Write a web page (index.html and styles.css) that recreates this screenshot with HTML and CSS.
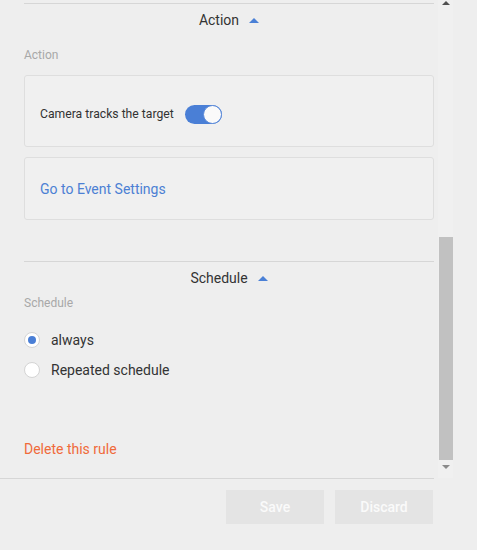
FILE: index.html
```html
<!DOCTYPE html>
<html>
<head>
<meta charset="utf-8">
<link rel="stylesheet" href="styles.css">
</head>
<body>
<div class="main">
  <div class="content">
    <div class="section-head first">
      <span class="title">Action</span>
      <span class="caret"></span>
    </div>
    <div class="label label-action">Action</div>
    <div class="card card-toggle">
      <span class="card-text">Camera tracks the target</span>
      <span class="toggle"><span class="knob"></span></span>
    </div>
    <div class="card card-link">
      <a class="link">Go to Event Settings</a>
    </div>
    <div class="section-head second">
      <span class="title">Schedule</span>
      <span class="caret"></span>
    </div>
    <div class="label label-schedule">Schedule</div>
    <div class="radios">
      <div class="radio-row"><span class="radio checked"></span><span>always</span></div>
      <div class="radio-row"><span class="radio"></span><span>Repeated schedule</span></div>
    </div>
    <div class="delete">Delete this rule</div>
  </div>
  <div class="scrollbar">
    <span class="arrow up"></span>
    <span class="thumb"></span>
    <span class="arrow down"></span>
  </div>
</div>
<div class="footer">
  <button class="btn">Save</button>
  <button class="btn">Discard</button>
</div>
</body>
</html>
```

FILE: styles.css
```css
html, body {
  margin: 0;
  padding: 0;
  background: #eeeeee;
  font-family: Roboto, "Liberation Sans", sans-serif;
  color: #333;
}
.main {
  display: flex;
  height: 478px;
}
.content {
  width: 410px;
  margin-left: 24px;
  padding-top: 3px;
  display: flex;
  flex-direction: column;
}
.section-head {
  border-top: 1px solid #d6d6d6;
  display: flex;
  justify-content: center;
  align-items: center;
  gap: 10px;
  height: 31px;
  font-size: 14px;
  color: #333;
}
.caret {
  width: 0;
  height: 0;
  border-left: 5px solid transparent;
  border-right: 5px solid transparent;
  border-bottom: 5px solid #4a80d6;
  margin-top: 1px;
}
.label {
  font-size: 12px;
  color: #a8a8a8;
}
.label-action {
  margin-top: 13px;
  height: 14px;
  line-height: 14px;
}
.label-schedule {
  margin-top: 3px;
  height: 14px;
  line-height: 14px;
}
.card {
  border: 1px solid #dedede;
  border-radius: 3px;
  background: #f0f0f0;
  box-sizing: border-box;
  padding-left: 15px;
  display: flex;
  align-items: center;
}
.card-toggle {
  margin-top: 13px;
  height: 72px;
  padding-top: 6px;
  font-size: 12.2px;
}
.card-text {
  margin-right: 11px;
}
.toggle {
  width: 37px;
  height: 19px;
  border-radius: 10px;
  background: #4a7fd6;
  display: flex;
  justify-content: flex-end;
  box-sizing: border-box;
}
.knob {
  width: 19px;
  height: 19px;
  border-radius: 50%;
  background: #fafafa;
  border: 1.5px solid #5b8ad9;
  box-sizing: border-box;
}
.card-link {
  margin-top: 10px;
  height: 63px;
}
.link {
  font-size: 14px;
  color: #4c80d4;
}
.section-head.second {
  margin-top: 41px;
}
.radios {
  margin-top: 21px;
  display: flex;
  flex-direction: column;
  gap: 12px;
  font-size: 14px;
}
.radio-row {
  display: flex;
  align-items: center;
  gap: 11px;
  height: 18px;
}
.radio {
  width: 16px;
  height: 16px;
  border-radius: 50%;
  background: #fff;
  border: 1px solid #d4d4d4;
  box-sizing: border-box;
  display: flex;
  align-items: center;
  justify-content: center;
}
.radio.checked::after {
  content: "";
  width: 8px;
  height: 8px;
  border-radius: 50%;
  background: #4a7fd6;
}
.delete {
  margin-top: 62px;
  font-size: 14px;
  color: #f06a3a;
}
.scrollbar {
  margin-left: 4px;
  width: 15px;
  display: flex;
  flex-direction: column;
  align-items: center;
  background: #f0f0f0;
}
.arrow {
  width: 0;
  height: 0;
  border-left: 4px solid transparent;
  border-right: 4px solid transparent;
}
.arrow.up {
  border-bottom: 4px solid #505050;
  margin-top: 1px;
}
.arrow.down {
  border-top: 4px solid #8a8a8a;
  margin-top: 5px;
}
.thumb {
  width: 14px;
  height: 223px;
  margin-top: 232px;
  background: #c1c1c1;
}
.footer {
  width: 434px;
  border-top: 1px solid #d6d6d6;
  display: flex;
  justify-content: flex-end;
  gap: 11px;
  padding-top: 11px;
  box-sizing: border-box;
}
.btn {
  width: 98px;
  height: 34px;
  border: none;
  background: #e4e4e4;
  color: #fafafa;
  font-family: Roboto, "Liberation Sans", sans-serif;
  font-size: 14px;
  font-weight: 500;
  padding: 0;
  margin: 0;
}
.btn:last-child {
  margin-right: 1px;
}
```
